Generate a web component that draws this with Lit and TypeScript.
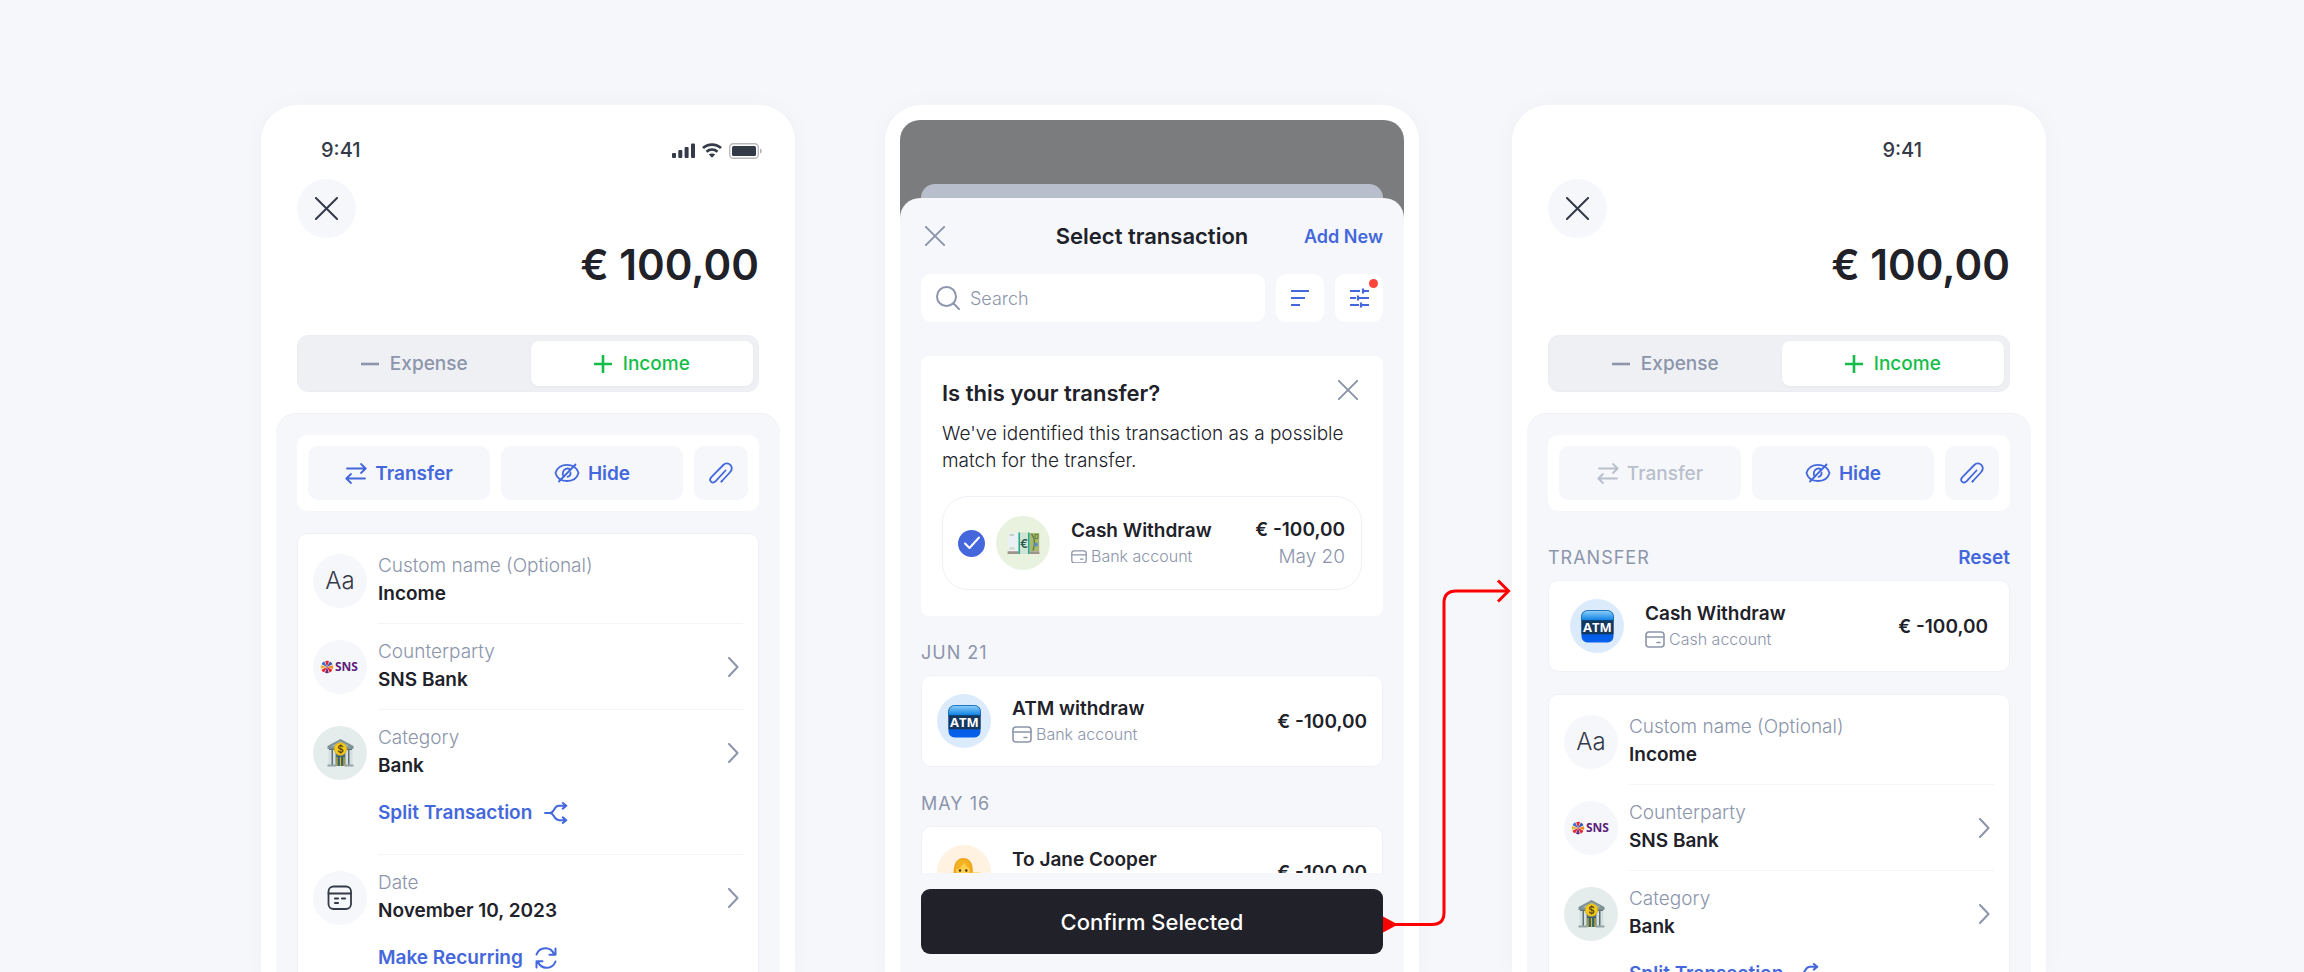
import { LitElement, html, css, svg, nothing, TemplateResult } from "lit";
import { customElement, property } from "lit/decorators.js";
import { classMap } from "lit/directives/class-map.js";

const stroke = (w: number, h: number, body: unknown, sw = 2, vb = `0 0 ${w} ${h}`) =>
  html`<svg width=${w} height=${h} viewBox=${vb} fill="none" stroke="currentColor" stroke-width=${sw} stroke-linecap="round" stroke-linejoin="round" aria-hidden="true">${body}</svg>`;

const icons = {
  close: (s: number, sw: number) => stroke(s, s, svg`<path d="M1 1 23 23M23 1 1 23"/>`, (sw * 24) / s, "0 0 24 24"),
  chevron: () => stroke(12, 20, svg`<path d="M2 1 10.500 10 2 19"/>`, 2),
  minus: () => stroke(18, 20, svg`<path d="M0 10H18" stroke-linecap="butt"/>`, 2.6),
  plus: () => stroke(18, 20, svg`<path d="M0 10H18M9 1V19" stroke-linecap="butt"/>`, 2.6),
  transfer: () => stroke(22, 22, svg`<path d="M2 6.500H20.500M16 2l4.700 4.500L16 11M20 16.500H1.500M6 12l-4.700 4.500L6 21"/>`, 1.8),
  hide: () => stroke(26, 20, svg`<path d="M1.500 10C3 4.500 8 1.800 13 1.800S23 4.500 24.500 10C23 15.500 18 18 13 18S3 15.500 1.500 10Z"/><path d="M21.500 1.500 5 18.500"/><path d="M9.800 13.500C7.800 11 8.800 7 11.800 5.800c1.700-.6 3.200-.2 4.400.9M16.500 9.500c.2 2-1 3.800-3 4.300"/>`, 1.8),
  clip: () => stroke(24, 22, svg`<path d="M12.500 19.500 20.800 10.500C23 8 23.300 5 21.300 2.900 19.300.9 16.300 1 14.300 3L2.600 14.800C.8 16.700.9 18.600 2 19.700c1.200 1.100 3.200 1 4.700-.5L16.500 8.500"/><path d="M12.500 19.500 13 19"/>`, 1.8, "0 0 24 22"),
  split: () => stroke(24, 22, svg`<path d="M1 11H6C10.500 11 9.500 3.800 15 3.800H22M6 11C10.500 11 9.500 18.200 15 18.200H22M18.800 1 22.300 3.800 18.800 6.600M18.800 15.400 22.300 18.200 18.800 21"/>`, 2),
  repeat: () => stroke(22, 22, svg`<path d="M1.500 7.500C4.500-.5 15.500-1 19 7M20.500 1.500V7.800H14.500M20.500 14.500C17.500 22.500 6.500 23 3 15M1.500 20.500V14.200H7.500"/>`, 2),
  calendar: () => stroke(26, 26, svg`<rect x="1.500" y="1.500" width="22.500" height="22.500" rx="5"/><path d="M1.500 8.500H24"/><path d="M8 13.500h3M15 13.500h3M8 18h3" stroke-width="2.200"/>`, 1.8),
  search: () => stroke(24, 24, svg`<circle cx="10.500" cy="10.500" r="9.500"/><path d="M17.500 17.500 23 23"/>`, 2),
  sort: () => stroke(18, 18, svg`<path d="M0 2H18M0 9H14M0 16H9" stroke-linecap="butt"/>`, 2.2),
  filter: () => stroke(19, 20, svg`<path d="M0 3H10M13 3H19M13 .5V5.500M0 10H6M9 10H19M8 7.500V12.500M0 17H9M12 17H19M11 14.500V19.500" stroke-linecap="butt"/>`, 2.2),
  wallet: (s: number) => stroke(s, s * 0.85, svg`<rect x="1" y="1" width="18" height="15" rx="3"/><path d="M1 6H19M12 11.500h3"/>`, 1.6, "0 0 20 17"),
  signal: () => html`<svg width="23" height="15" viewBox="0 0 23 15" fill="currentColor" aria-hidden="true"><rect y="10" width="4" height="5" rx="1"/><rect x="6.300" y="7" width="4" height="8" rx="1"/><rect x="12.600" y="4" width="4" height="11" rx="1"/><rect x="19" y="0.500" width="4" height="14.500" rx="1"/></svg>`,
  wifi: () => html`<svg width="20" height="15" viewBox="0 0 20 15" fill="none" stroke="currentColor" stroke-width="2.800" aria-hidden="true"><path d="M1 5C6 .4 14 .4 19 5"/><path d="M4.500 8.700c3.200-2.800 7.800-2.800 11 0"/><path d="M10 14.800 6.800 11.600c1.900-1.500 4.500-1.500 6.400 0Z" fill="currentColor" stroke="none"/></svg>`,
  battery: () => html`<svg width="34" height="16" viewBox="0 0 34 16" aria-hidden="true"><rect x=".7" y=".7" width="28.600" height="14.600" rx="3.500" fill="none" stroke="currentColor" stroke-opacity=".35" stroke-width="1.400"/><rect x="3" y="3" width="24" height="10" rx="1.500" fill="currentColor"/><path d="M31 5.500c2.300 1 2.300 4 0 5Z" fill="currentColor" opacity=".4"/></svg>`,
};

const wheel = ["#e3292f", "#3a58b0", "#f08a2a", "#e3292f", "#6a2a86", "#e3292f", "#f3b33a", "#3a6fd0"];

const pictures: Record<string, () => TemplateResult> = {
  aa: () => html`<span class="aa">Aa</span>`,
  calendar: () => icons.calendar(),
  sns: () => html`
    <svg width="40" height="16" viewBox="0 0 40 16" role="img" aria-label="SNS">
      ${wheel.map((fill, i) => svg`<path d="M7 8 5.200 2.300C6.300 1.600 8 1.600 9 2.200Z" fill=${fill} transform="rotate(${i * 45} 7 8)"/>`)}
      <text x="15" y="12" font-family="Open Sans, sans-serif" font-weight="700" font-size="12" fill="#5f1f7a">SNS</text>
    </svg>`,
  bank: () => html`
    <svg width="27" height="28" viewBox="0 0 27 28" aria-hidden="true">
      <rect x="2" y="10" width="23" height="16" fill="#5b7174"/>
      <path d="M13.500 0 26.500 7V10H.5V7Z" fill="#7d9294"/><path d="M13.500 2.200 23 7.400H4Z" fill="#a9b9ba"/>
      <g fill="#d5dfe1"><rect x="1.500" y="11" width="3" height="15"/><rect x="6" y="11" width="2.600" height="15"/><rect x="18.400" y="11" width="2.600" height="15"/><rect x="22.500" y="11" width="3" height="15"/></g>
      <rect x="9.500" y="17" width="8" height="10" fill="#2f6173"/><path d="M10 18v9M13.500 18v9M17 18v9" stroke="#d8b52c" stroke-width="1.200"/>
      <rect x=".5" y="25.500" width="9" height="2" fill="#93a4a6"/><rect x="17.500" y="25.500" width="9" height="2" fill="#93a4a6"/>
      <circle cx="13.500" cy="10" r="6.200" fill="#f5cc1d" stroke="#d9a90f" stroke-width=".8"/>
      <text x="13.500" y="13.800" text-anchor="middle" font-family="Inter, sans-serif" font-size="10" font-weight="600" fill="#5c4710">$</text>
    </svg>`,
  cash: () => html`
    <svg width="33" height="23" viewBox="0 0 33 23" aria-hidden="true">
      <path d="M1 18 32 18 32.500 22H.5Z" fill="#8a7f74"/><path d="M1 19.500H32M1 21H32" stroke="#cfc8bd" stroke-width=".6"/>
      <rect x=".8" y="1" width="31.400" height="18" fill="#e9f1f4"/><rect x="21" y="1" width="11.200" height="18" fill="#a9b871"/>
      <rect x="2.500" y="2" width="4.500" height="2" fill="#c3d2bf"/><rect x="2.500" y="15.500" width="5" height="2" fill="#cbd8b4"/>
      <path d="M24.500 2c3.500 4 4 9 1.500 16.500" fill="none" stroke="#5f7d3b" stroke-width="1.300"/><path d="M28 2.500h3v4h-3Z" fill="none" stroke="#5f7d3b"/><circle cx="29" cy="12.500" r="1.900" fill="#4f8fc9"/>
      <rect x="11.500" y=".5" width="11" height="21.500" fill="#cfe4d4"/><rect x="11.500" y=".5" width="1.500" height="21.500" fill="#25a58a"/><rect x="21" y=".5" width="1.500" height="21.500" fill="#25a58a"/>
      <text x="17" y="15.500" text-anchor="middle" font-family="Inter, sans-serif" font-size="12" font-weight="600" fill="#2b5a4d">€</text>
    </svg>`,
  atm: () => html`
    <svg width="33" height="33" viewBox="0 0 33 33" role="img" aria-label="ATM">
      <defs>
        <linearGradient id="atm-top" x2="0" y2="1"><stop offset="0" stop-color="#8fd0f8"/><stop offset="1" stop-color="#0a7fe4"/></linearGradient>
        <linearGradient id="atm-low" x2="0" y2="1"><stop offset="0" stop-color="#0053c4"/><stop offset="1" stop-color="#0560ee"/></linearGradient>
      </defs>
      <rect x=".5" y=".5" width="32" height="32" rx="6" fill="url(#atm-low)"/>
      <path d="M.5 10.500V6.500a6 6 0 0 1 6-6h20a6 6 0 0 1 6 6v4Z" fill="url(#atm-top)" stroke="#0a63ae" stroke-width=".8"/>
      <rect x=".5" y="10.300" width="32" height="14" fill="#14375f"/>
      <text x="16.500" y="22" text-anchor="middle" font-family="Open Sans, sans-serif" font-size="13" font-weight="700" fill="#fff">ATM</text>
    </svg>`,
  woman: () => html`
    <svg width="32" height="30" viewBox="0 0 32 30" aria-hidden="true">
      <path d="M4 24C7 21 5 16 6 11 7 4 11 .8 15.500 1c5 .2 8.500 4 9 9 .4 4 0 8 3 13Z" fill="#f0a41c"/>
      <path d="M22 15.500h9.500v2.600L24 21Z" fill="#fbc53a"/>
      <ellipse cx="15" cy="13.500" rx="7" ry="8.500" fill="#fcd04c"/>
      <path d="M7.500 13C7.500 6 10 2.500 15 2.500s8 4 7.800 10C20 11 17.500 8.500 16 5.500 14.500 9.500 11 12 7.500 13Z" fill="#f5b223"/>
      <circle cx="12" cy="13.500" r="1.200" fill="#4b2c14"/><circle cx="18.300" cy="13.500" r="1.200" fill="#4b2c14"/>
      <path d="M12.500 18c1.800 1.200 3.600 1.200 5.400 0" stroke="#a34d1b" fill="none"/>
      <path d="M6 30c1-5 5-7 9-7s8 2 9 7Z" fill="#8d4fc4"/>
    </svg>`,
};

const base = css`
  * { box-sizing: border-box; }
  button, input { font: inherit; color: inherit; margin: 0; padding: 0; border: 0; background: none; }
  button { cursor: pointer; }
  svg { display: block; flex: none; }
  .disc { display: grid; place-items: center; flex: none; width: 54px; height: 54px; border-radius: 50%; background: #f5f7fb; color: #343a48; }
  .disc.bank { background: #e5ecec; }
  .disc.cash { background: #e8f2df; }
  .disc.atm { background: #dcebfc; }
  .disc.woman { background: #fff2e0; }
  .aa { font-size: 24px; line-height: 32px; font-weight: 300; }
`;

/** One transaction line: picture, title with its account, and the amount. */
@customElement("transaction-item")
class TransactionItem extends LitElement {
  @property() picture = "atm";
  @property() heading = "";
  @property() account = "";
  @property() amount = "";
  @property() date = "";

  static styles = [base, css`
    :host { display: flex; align-items: center; flex: 1; min-width: 0; }
    .text { flex: 1; min-width: 0; margin-left: 21px; white-space: nowrap; }
    .heading { font-size: 19px; line-height: 27px; font-weight: 600; color: #202129; }
    .account { display: flex; align-items: center; gap: 4px; font-size: 16px; line-height: 25px; font-weight: 300; color: #8c95ab; }
    .sum { text-align: right; white-space: nowrap; font-size: 19px; line-height: 27px; font-weight: 600; color: #202129; }
    .date { font-weight: 300; color: #8c95ab; }
  `];

  render() {
    return html`
      <span class="disc ${this.picture}">${pictures[this.picture]()}</span>
      <div class="text">
        <div class="heading">${this.heading}</div>
        <div class="account">${icons.wallet(this.date ? 16 : 20)}<span>${this.account}</span></div>
      </div>
      <div class="sum">
        <div>${this.amount}</div>
        ${this.date ? html`<div class="date">${this.date}</div>` : nothing}
      </div>`;
  }
}

interface Field { picture: string; label: string; value: string; editable?: boolean; link?: string; linkIcon?: () => unknown; }

const fields: Field[] = [
  { picture: "aa", label: "Custom name (Optional)", value: "Income", editable: true },
  { picture: "sns", label: "Counterparty", value: "SNS Bank" },
  { picture: "bank", label: "Category", value: "Bank", link: "Split Transaction", linkIcon: icons.split },
  { picture: "calendar", label: "Date", value: "November 10, 2023", link: "Make Recurring", linkIcon: icons.repeat },
];

/** The transaction form; with `linked` it also lists the matched transfer. */
@customElement("transaction-form")
class TransactionForm extends LitElement {
  @property({ type: Boolean }) linked = false;

  static styles = [base, css`
    :host { display: block; padding: 32px 15px 0; }
    .status { display: flex; align-items: center; height: 27px; padding: 0 17px 0 45px; color: #343a48; }
    .status.late { justify-content: flex-end; padding-right: 109px; }
    .time { font-size: 20px; line-height: 27px; font-weight: 500; }
    .device { display: flex; align-items: center; gap: 7px; margin-left: auto; }
    .top { padding: 15px 21px 21px; }
    .close { display: grid; place-items: center; width: 59px; height: 59px; border-radius: 50%; background: #f5f7fb; color: #343a48; }
    .amount { margin: 0; text-align: right; font-size: 42px; line-height: 54px; font-weight: 600; color: #202129; }
    .segments { display: grid; grid-template-columns: 1fr 1fr; gap: 5px; margin: 43px 0 0; padding: 5px; border: 1px solid #ecedf2; border-radius: 11px; background: #eff0f4; }
    .segment { display: flex; align-items: center; justify-content: center; gap: 11px; height: 45px; border-radius: 8px; font-size: 19px; font-weight: 500; color: #8c95ab; cursor: pointer; }
    .segment:has(:checked) { background: #fff; color: #14bd48; box-shadow: 0 1px 3px #2021290a; }
    .segment input { position: absolute; opacity: 0; }
    .panel { padding: 21px; border-top: 1px solid #eff0f5; border-radius: 20px 20px 0 0; background: #f5f7fb; min-height: 900px; }
    .actions { display: grid; grid-template-columns: 1fr 1fr 54px; gap: 11px; padding: 11px; border-radius: 10px; background: #fff; }
    .action { display: flex; align-items: center; justify-content: center; gap: 8px; height: 54px; border-radius: 10px; background: #f5f7fb; font-size: 19px; font-weight: 600; color: #4468dc; }
    .action:disabled { color: #b9bfcc; font-weight: 500; }
    .group { display: flex; justify-content: space-between; padding: 33px 0 9px; font-size: 18px; line-height: 27px; color: #8c95ab; }
    .group h2 { margin: 0; font: inherit; letter-spacing: 1px; }
    .link { font-size: 19px; font-weight: 600; color: #4468dc; }
    .card { border: 1px solid #eff1f6; border-radius: 10px; background: #fff; }
    .match { display: flex; height: 92px; padding: 0 21px; }
    .fields { margin-top: 22px; padding: 20px 15px; }
    .field { display: grid; grid-template-columns: 54px 1fr; column-gap: 11px; padding-bottom: 16px; }
    .body { display: flex; align-items: center; min-width: 0; height: 54px; }
    .pair { flex: 1; min-width: 0; padding-bottom: 3px; font-size: 19px; line-height: 28px; }
    .label { display: block; font-weight: 300; color: #8c95ab; }
    .value { display: block; width: 100%; height: 28px; font-weight: 600; color: #202129; }
    .go { display: grid; place-items: center; width: 20px; height: 32px; color: #8c95ab; }
    .more { grid-column: 2; display: flex; align-items: center; gap: 12px; justify-self: start; height: 27px; margin: 19px 0 13px; font-size: 19px; }
    .rule { grid-column: 2; height: 1px; margin: 15px 0 0; background: #f3f4f8; }
  `];

  private field(f: Field, index: number) {
    return html`
      <div class="field">
        <span class="disc ${f.picture}">${pictures[f.picture]()}</span>
        <div class="body">
          <div class="pair">
            ${f.editable
              ? html`<label class="label" for="name">${f.label}</label><input class="value" id="name" type="text" .value=${f.value} />`
              : html`<span class="label">${f.label}</span><span class="value">${f.value}</span>`}
          </div>
          ${f.editable ? nothing : html`<button class="go" aria-label="Change ${f.label}">${icons.chevron()}</button>`}
        </div>
        ${f.link ? html`<button class="link more">${f.link}${f.linkIcon!()}</button>` : nothing}
        ${index < fields.length - 1 ? html`<div class="rule"></div>` : nothing}
      </div>`;
  }

  render() {
    return html`
      <div class=${classMap({ status: true, late: this.linked })}>
        <span class="time">9:41</span>
        ${this.linked ? nothing : html`<span class="device">${icons.signal()}${icons.wifi()}${icons.battery()}</span>`}
      </div>
      <div class="top">
        <button class="close" aria-label="Close">${icons.close(23, 2)}</button>
        <p class="amount">€ 100,00</p>
        <div class="segments" role="radiogroup" aria-label="Type">
          <label class="segment"><input type="radio" name="type" />${icons.minus()}<span>Expense</span></label>
          <label class="segment"><input type="radio" name="type" checked />${icons.plus()}<span>Income</span></label>
        </div>
      </div>
      <div class="panel">
        <div class="actions">
          <button class="action" ?disabled=${this.linked}>${icons.transfer()}Transfer</button>
          <button class="action">${icons.hide()}Hide</button>
          <button class="action" aria-label="Attach">${icons.clip()}</button>
        </div>
        ${this.linked
          ? html`
              <div class="group"><h2>TRANSFER</h2><button class="link">Reset</button></div>
              <div class="card match">
                <transaction-item picture="atm" heading="Cash Withdraw" account="Cash account" amount="€ -100,00"></transaction-item>
              </div>`
          : nothing}
        <div class="card fields">${fields.map((f, i) => this.field(f, i))}</div>
      </div>`;
  }
}

/** The sheet in which the other half of a transfer is picked. */
@customElement("transaction-picker")
class TransactionPicker extends LitElement {
  static styles = [base, css`
    :host { display: flex; flex-direction: column; height: 100%; padding: 15px 15px 0; }
    .behind { display: flex; flex: 1; flex-direction: column; min-height: 0; padding-top: 64px; border-radius: 20px 20px 0 0; background: linear-gradient(#7b7c7d 120px, #f5f7fb 120px); }
    .under { height: 14px; margin: 0 21px; border-radius: 14px 14px 0 0; background: #b8becb; }
    .sheet { display: flex; flex: 1; flex-direction: column; min-height: 0; padding: 0 21px; border-radius: 20px 20px 0 0; background: #f5f7fb; }
    .head { display: grid; grid-template-columns: 1fr auto 1fr; align-items: center; height: 76px; }
    .head h1 { margin: 0; font-size: 22px; line-height: 28px; font-weight: 600; color: #202129; }
    .close { display: grid; place-items: center; width: 28px; height: 28px; color: #8c95ab; }
    .link { justify-self: end; font-size: 18px; line-height: 27px; font-weight: 600; color: #4468dc; }
    .tools { display: flex; gap: 11px; }
    .search { display: flex; flex: 1; align-items: center; gap: 10px; min-width: 0; height: 48px; padding: 0 15px; border-radius: 10px; background: #fff; color: #8c95ab; }
    .search input { flex: 1; min-width: 0; height: 27px; font-size: 18px; font-weight: 300; outline: 0; }
    .search input::placeholder { color: #8c95ab; opacity: 1; }
    .tool { position: relative; display: grid; place-items: center; width: 48px; height: 48px; border-radius: 10px; background: #fff; color: #4468dc; }
    .dot { position: absolute; top: 5px; right: 5px; width: 9px; height: 9px; border-radius: 50%; background: #ff453c; }
    .list { flex: none; height: 517px; margin-top: 34px; overflow: hidden; }
    .hint { padding: 22px 21px 26px; border-radius: 8px; background: #fff; }
    .hint-head { display: flex; align-items: flex-start; justify-content: space-between; }
    .hint-head .close { height: 24px; }
    .hint h2 { margin: 0; font-size: 22px; line-height: 30px; font-weight: 600; color: #202129; }
    .hint p { margin: 12px 0 22px; font-size: 19px; line-height: 27px; font-weight: 300; color: #202129; }
    .choice { display: flex; align-items: center; gap: 11px; height: 94px; padding: 0 16px 0 15px; border: 1px solid #eef0f6; border-radius: 26px; }
    .tick { position: relative; display: grid; place-items: center; flex: none; width: 27px; height: 27px; }
    .tick input { appearance: none; width: 27px; height: 27px; border-radius: 50%; background: #4468dc; }
    .tick svg { position: absolute; color: #fff; pointer-events: none; }
    h3 { margin: 23px 0 9px; font-size: 18px; line-height: 27px; font-weight: 400; letter-spacing: 1px; color: #8c95ab; }
    .row { display: flex; height: 92px; padding: 0 15px; border: 1px solid #eff1f6; border-radius: 10px; background: #fff; }
    .foot { position: relative; margin-top: 16px; }
    .confirm { width: 100%; height: 65px; border-radius: 9px; background: #202129; color: #fff; font-size: 22px; font-weight: 500; }
    .route { position: absolute; left: 100%; bottom: 20px; color: #f00; pointer-events: none; }
  `];

  render() {
    return html`
      <div class="behind">
        <div class="under"></div>
        <div class="sheet">
          <div class="head">
            <button class="close" aria-label="Close">${icons.close(20, 2)}</button>
            <h1>Select transaction</h1>
            <button class="link">Add New</button>
          </div>
          <div class="tools">
            <label class="search">${icons.search()}<input type="search" placeholder="Search" aria-label="Search" /></label>
            <button class="tool" aria-label="Sort">${icons.sort()}</button>
            <button class="tool" aria-label="Filter">${icons.filter()}<span class="dot"></span></button>
          </div>
          <div class="list">
            <section class="hint">
              <div class="hint-head">
                <h2>Is this your transfer?</h2>
                <button class="close" aria-label="Dismiss">${icons.close(20, 2)}</button>
              </div>
              <p>We've identified this transaction as a possible match for the transfer.</p>
              <div class="choice">
                <span class="tick"><input type="checkbox" checked aria-label="Cash Withdraw" />${stroke(16, 14, svg`<path d="M1 7.500 5.500 12 15 1.500"/>`, 2)}</span>
                <transaction-item picture="cash" heading="Cash Withdraw" account="Bank account" amount="€ -100,00" date="May 20"></transaction-item>
              </div>
            </section>
            <h3>JUN 21</h3>
            <div class="row"><transaction-item picture="atm" heading="ATM withdraw" account="Bank account" amount="€ -100,00"></transaction-item></div>
            <h3>MAY 16</h3>
            <div class="row"><transaction-item picture="woman" heading="To Jane Cooper" account="Bank account" amount="€ -100,00"></transaction-item></div>
          </div>
          <div class="foot">
            <button class="confirm">Confirm Selected</button>
            <svg class="route" width="128" height="360" viewBox="0 -10 128 360" fill="none" stroke="currentColor" stroke-width="3" aria-hidden="true">
              <path d="M0 332.500 15 340.500 0 348.500Z" fill="currentColor" stroke="none"/>
              <path d="M8 340.500H49Q61 340.500 61 328.500V19Q61 7 73 7H125"/>
              <path d="M115-3.500 125.500 7 115 17.500"/>
            </svg>
          </div>
        </div>
      </div>`;
  }
}

@customElement("app-root")
class AppRoot extends LitElement {
  static styles = css`
    :host { display: block; height: 100vh; overflow: hidden; background: #f5f7fb; font-family: Inter, "Noto Sans", sans-serif; }
    .stage { box-sizing: border-box; display: grid; grid-template-columns: minmax(0, 1fr) 90px minmax(0, 1fr) 93px minmax(0, 1fr); height: 100%; padding: 105px 258px 0 261px; }
    .phone { min-height: 0; border-radius: 36px 36px 0 0; background: #fff; box-shadow: 0 0 24px #20212908; }
    .phone:nth-child(2) { grid-column: 3; }
    .phone:nth-child(3) { grid-column: 5; }
  `;

  render() {
    return html`
      <main class="stage">
        <div class="phone"><transaction-form></transaction-form></div>
        <div class="phone"><transaction-picker></transaction-picker></div>
        <div class="phone"><transaction-form linked></transaction-form></div>
      </main>`;
  }
}
